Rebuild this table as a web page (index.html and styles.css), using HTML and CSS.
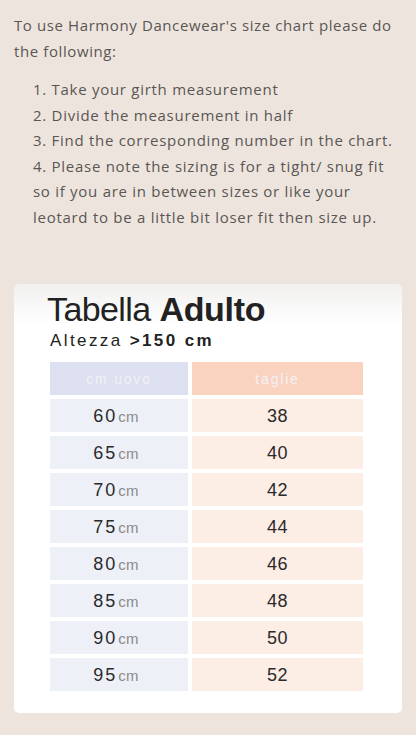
FILE: index.html
```html
<!DOCTYPE html>
<html lang="en">
<head>
    <meta charset="UTF-8">
    <meta name="viewport" content="width=device-width, initial-scale=1.0">
    <title>Size Chart</title>
    <link rel="stylesheet" href="styles.css">
</head>
<body>
    <p class="intro">To use Harmony Dancewear's size chart please do the following:</p>

    <div class="steps">
        <p>1. Take your girth measurement</p>
        <p>2. Divide the measurement in half</p>
        <p>3. Find the corresponding number in the chart.</p>
        <p>4. Please note the sizing is for a tight/ snug fit so if you are in between sizes or like your leotard to be a little bit loser fit then size up.</p>
    </div>

    <div class="chart">
        <h1 class="chart-title">Tabella <b>Adulto</b></h1>
        <p class="chart-sub">Altezza <b>&gt;150 cm</b></p>

        <div class="grid">
            <div class="head head-cm">cm uovo</div>
            <div class="head head-size">taglie</div>

            <div class="cell cm">60<span>cm</span></div><div class="cell size">38</div>
            <div class="cell cm">65<span>cm</span></div><div class="cell size">40</div>
            <div class="cell cm">70<span>cm</span></div><div class="cell size">42</div>
            <div class="cell cm">75<span>cm</span></div><div class="cell size">44</div>
            <div class="cell cm">80<span>cm</span></div><div class="cell size">46</div>
            <div class="cell cm">85<span>cm</span></div><div class="cell size">48</div>
            <div class="cell cm">90<span>cm</span></div><div class="cell size">50</div>
            <div class="cell cm">95<span>cm</span></div><div class="cell size">52</div>
        </div>
    </div>
</body>
</html>
```

FILE: styles.css
```css
body {
    margin: 0;
    padding: 13px 14px 20px;
    background-color: #ede5dd;
    color: #5a5655;
    font-family: "Open Sans", Lato, sans-serif;
    font-size: 15px;
    letter-spacing: 0.6px;
    line-height: 25.5px;
}
p {
    margin: 0;
}
.intro {
    margin-bottom: 13px;
}
.steps {
    padding-left: 19px;
    padding-right: 7px;
    letter-spacing: 0.72px;
}
.chart {
    margin-top: 54px;
    background: linear-gradient(#f1f0ef 0, #ffffff 40px);
    border-radius: 5px;
    padding: 6px 38px 22px 36px;
    color: #222;
    font-family: "Liberation Sans", Arial, sans-serif;
    letter-spacing: 0;
}
.chart-title {
    margin: 0;
    font-size: 34px;
    font-weight: normal;
    line-height: 39px;
    letter-spacing: -0.6px;
    margin-left: -3px;
}
.chart-title b {
    font-weight: bold;
    letter-spacing: -0.3px;
}
.chart-sub {
    font-size: 17px;
    line-height: 24px;
    letter-spacing: 2.4px;
    margin-bottom: 9px;
}
.grid {
    display: grid;
    grid-template-columns: 138px 171px;
    column-gap: 4px;
    row-gap: 4px;
}
.head,
.cell {
    height: 33px;
    line-height: 34px;
    text-align: center;
}
.head {
    color: #f3f1f5;
    font-size: 14px;
    letter-spacing: 1.8px;
}
.head-cm {
    background-color: #dce0f1;
}
.head-size {
    background-color: #f9d3c0;
}
.cell {
    font-size: 18px;
    letter-spacing: 2px;
    color: #2a2a2a;
}
.cm {
    background-color: #eef0f8;
    padding-right: 6px;
}
.cm span {
    font-size: 15px;
    color: #8a8a8a;
    letter-spacing: 0.3px;
    margin-left: 1px;
}
.size {
    background-color: #fcede5;
    letter-spacing: 0.5px;
}
```
